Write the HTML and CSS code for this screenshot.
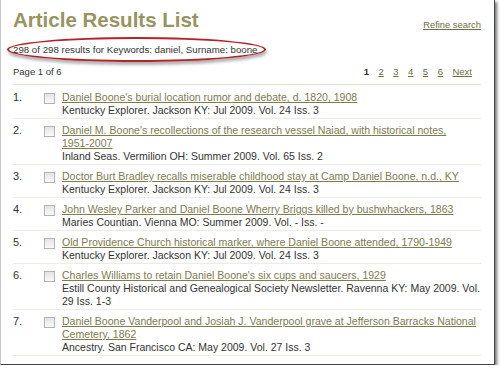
FILE: index.html
```html
<!DOCTYPE html>
<html lang="en">
<head>
    <meta charset="UTF-8">
    <title>Article Results List</title>
    <link rel="stylesheet" href="styles.css">
</head>
<body>

    <div class="frame">
        <div class="header">
            <h1>Article Results List</h1>
            <a href="#" class="refine">Refine search</a>
        </div>

        <p class="summary"><span class="circled">298 of 298 results for Keywords: daniel, Surname: boone</span></p>

        <div class="pager">
            <span>Page 1 of 6</span>
            <div class="pages">
                <b>1</b>
                <a href="#">2</a>
                <a href="#">3</a>
                <a href="#">4</a>
                <a href="#">5</a>
                <a href="#">6</a>
                <a href="#">Next</a>
            </div>
        </div>

        <!-- Lista de resultados -->
        <ol class="results">
            <li>
                <span class="num">1.</span>
                <span class="box"></span>
                <div class="info">
                    <a href="#">Daniel Boone's burial location rumor and debate, d. 1820, 1908</a>
                    <div class="source">Kentucky Explorer. Jackson KY: Jul 2009. Vol. 24 Iss. 3</div>
                </div>
            </li>
            <li>
                <span class="num">2.</span>
                <span class="box"></span>
                <div class="info">
                    <a href="#">Daniel M. Boone's recollections of the research vessel Naiad, with historical notes, <span class="nw">1951-2007</span></a>
                    <div class="source">Inland Seas. Vermilion OH: Summer 2009. Vol. 65 Iss. 2</div>
                </div>
            </li>
            <li>
                <span class="num">3.</span>
                <span class="box"></span>
                <div class="info">
                    <a href="#">Doctor Burt Bradley recalls miserable childhood stay at Camp Daniel Boone, n.d., KY</a>
                    <div class="source">Kentucky Explorer. Jackson KY: Jul 2009. Vol. 24 Iss. 3</div>
                </div>
            </li>
            <li>
                <span class="num">4.</span>
                <span class="box"></span>
                <div class="info">
                    <a href="#">John Wesley Parker and Daniel Boone Wherry Briggs killed by bushwhackers, 1863</a>
                    <div class="source">Maries Countian. Vienna MO: Summer 2009. Vol. - Iss. -</div>
                </div>
            </li>
            <li>
                <span class="num">5.</span>
                <span class="box"></span>
                <div class="info">
                    <a href="#">Old Providence Church historical marker, where Daniel Boone attended, <span class="nw">1790-1949</span></a>
                    <div class="source">Kentucky Explorer. Jackson KY: Jul 2009. Vol. 24 Iss. 3</div>
                </div>
            </li>
            <li>
                <span class="num">6.</span>
                <span class="box"></span>
                <div class="info">
                    <a href="#">Charles Williams to retain Daniel Boone's six cups and saucers, 1929</a>
                    <div class="source">Estill County Historical and Genealogical Society Newsletter. Ravenna KY: May 2009. Vol. 29 Iss. <span class="nw">1-3</span></div>
                </div>
            </li>
            <li>
                <span class="num">7.</span>
                <span class="box"></span>
                <div class="info">
                    <a href="#">Daniel Boone Vanderpool and Josiah J. Vanderpool grave at Jefferson Barracks National Cemetery, 1862</a>
                    <div class="source">Ancestry. San Francisco CA: May 2009. Vol. 27 Iss. 3</div>
                </div>
            </li>
        </ol>
    </div>

</body>
</html>
```

FILE: styles.css
```css
body {
    margin: 0;
    background: #fff;
    font-family: "Liberation Sans", Arial, sans-serif;
    color: #333;
}

.frame {
    position: relative;
    width: 481px;
    height: 364px;
    overflow: hidden;
    padding: 0 0 0 12px;
    background: #fff;
    border-left: 1px solid #c8c8c8;
    border-right: 1px solid #444;
    border-bottom: 1px solid #444;
    box-shadow: 2px 2px 3px rgba(0, 0, 0, 0.55);
}

.header {
    display: flex;
    justify-content: space-between;
    align-items: flex-end;
    width: 468px;
    padding-top: 8px;
}

h1 {
    margin: 0;
    font-size: 20.5px;
    font-weight: bold;
    color: #97955f;
    line-height: 24px;
}

.refine {
    font-size: 9.4px;
    color: #6f6d45;
    margin-bottom: 2px;
}

.summary {
    margin: 11px 0 0;
    font-size: 9.7px;
    line-height: 14px;
}

.circled {
    position: relative;
}

.circled::after {
    content: "";
    position: absolute;
    left: -6px;
    right: -8px;
    top: -7px;
    bottom: -7px;
    border: 2px solid #b3232a;
    border-radius: 50%;
    box-shadow: 1px 3px 3px rgba(0, 0, 0, 0.3);
}

.pager {
    display: flex;
    justify-content: space-between;
    width: 468px;
    margin-top: 8px;
    padding-bottom: 5px;
    font-size: 9.5px;
    line-height: 14px;
    border-bottom: 1px solid #e4e4d6;
}

.pages {
    display: flex;
    gap: 9.5px;
    padding-right: 9px;
}

.pages a {
    color: #6f6d45;
}

.results {
    list-style: none;
    margin: 1px 0 0;
    padding: 0;
    width: 468px;
}

.results li {
    display: flex;
    padding: 5px 0 1px;
    font-size: 10.55px;
    line-height: 13px;
    border-bottom: 1px solid #ecece2;
}

.num {
    width: 31px;
    font-size: 11px;
}

.box {
    width: 9px;
    height: 9px;
    margin-top: 2px;
    margin-right: 7px;
    border: 1px solid #b4b4b4;
    background: linear-gradient(#e4e4e4, #fafafa);
}

.info {
    flex: 1;
}

.info a {
    color: #7d7b4f;
}

.source {
    font-size: 10.5px;
}

.nw {
    white-space: nowrap;
}
```
